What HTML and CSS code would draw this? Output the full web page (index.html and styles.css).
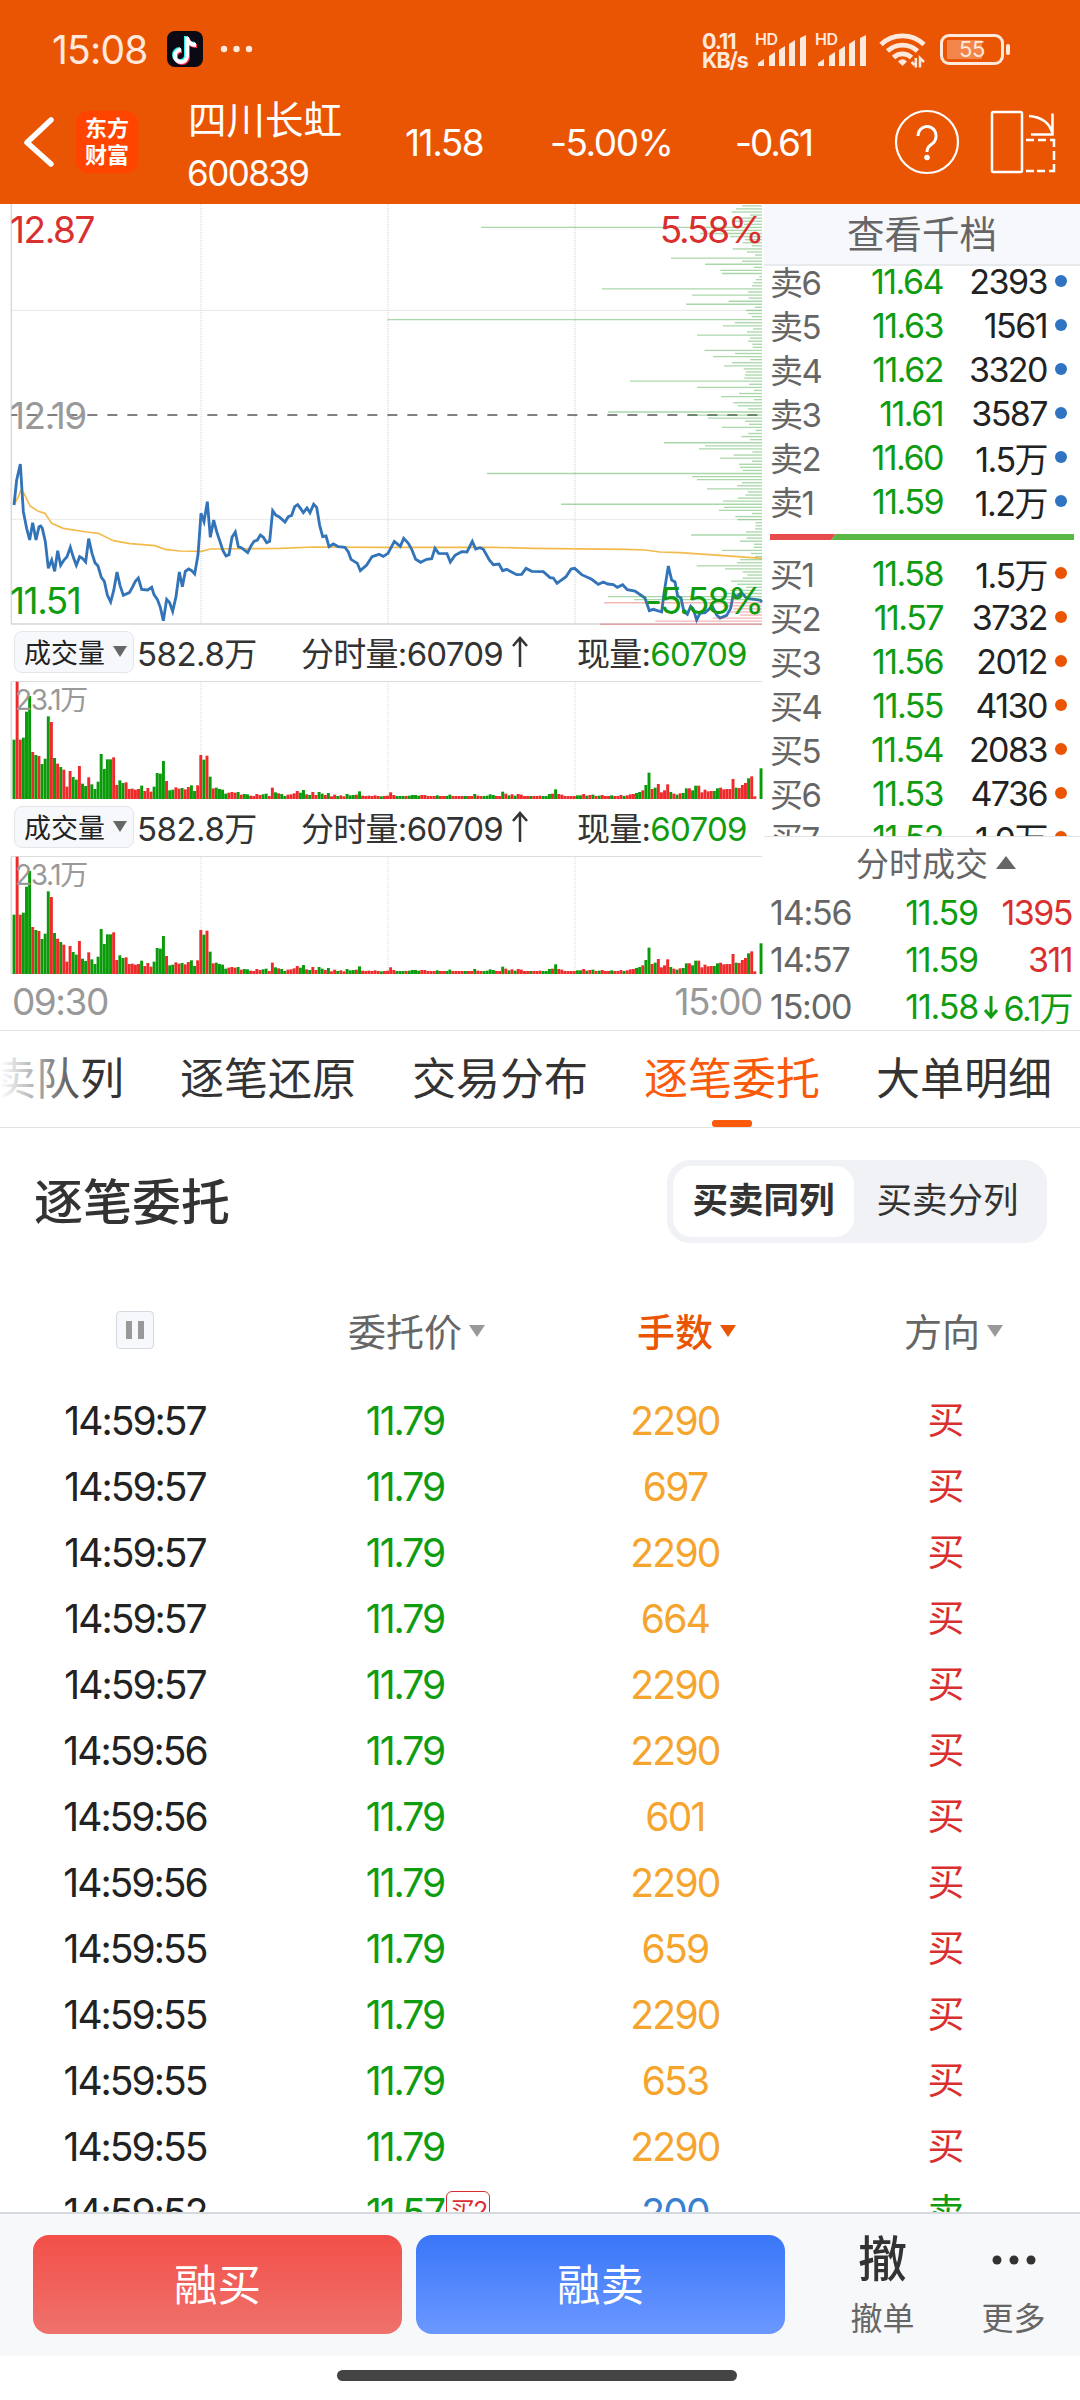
FILE: index.html
```html
<!DOCTYPE html>
<html lang="zh-CN">
<head>
    <meta charset="UTF-8">
    <meta name="viewport" content="width=device-width, initial-scale=1.0">
    <title>四川长虹 600839</title>
    <link rel="stylesheet" href="styles.css">
</head>
<body>
    <div class="header">
        <div class="status-bar">
            <span class="clock">15:08</span>
            <svg class="app-icon" width="36" height="36" viewBox="0 0 36 36">
                <rect width="36" height="36" rx="8" fill="#0b0a14"/>
                <g fill="none" stroke-width="4">
                    <path d="M19 5v19a6 6 0 1 1-6-6M19 6c1 5 4 7 9 7" stroke="#25f4ee"/>
                    <path d="M21 7v19a6 6 0 1 1-6-6M21 8c1 5 4 7 9 7" stroke="#fe2c55"/>
                    <path d="M20 6v19a6 6 0 1 1-6-6M20 7c1 5 4 7 9 7" stroke="#fff"/>
                </g>
            </svg>
            <svg class="more-dots" width="34" height="8" viewBox="0 0 34 8" fill="#ffe9dc">
                <circle cx="4" cy="4" r="3.2"/><circle cx="16.5" cy="4" r="3.2"/><circle cx="29" cy="4" r="3.2"/>
            </svg>
            <div class="net-speed"><span>0.11</span><span>KB/s</span></div>
            <div class="signal">
                <span>HD</span>
                <svg width="50" height="32" viewBox="0 0 50 32" fill="#ffe9dc">
                    <path d="M1 31v-3l6-4v7zM12 31V21l6-4v14zM22 31V15l6-4v20zM32 31V9l6-4v26zM43 31V3l6-3v31z"/>
                </svg>
            </div>
            <div class="signal signal-2">
                <span>HD</span>
                <svg width="50" height="32" viewBox="0 0 50 32" fill="#ffe9dc">
                    <path d="M1 31v-3l6-4v7zM12 31V21l6-4v14zM22 31V15l6-4v20zM32 31V9l6-4v26zM43 31V3l6-3v31z"/>
                </svg>
            </div>
            <svg class="wifi" width="48" height="36" viewBox="0 0 48 36" fill="none" stroke="#ffe9dc" stroke-width="4.8">
                <path d="M2 12.5a31 31 0 0 1 43 0"/>
                <path d="M8.5 19a22 22 0 0 1 30 0"/>
                <path d="M14.5 25.5a13 13 0 0 1 18 0"/>
                <path d="M23.5 34l-4.5-4.5q4.5-4.5 9 0z" fill="#ffe9dc" stroke="none"/>
                <path d="M32.5 30l3 3M36.8 26v9.5M41 35.5V26l4 4" stroke-width="2.5"/>
            </svg>
            <div class="battery"><span>55</span></div>
        </div>
        <div class="title-bar">
            <svg class="back" width="32" height="54" viewBox="0 0 32 54" fill="none" stroke="#fff" stroke-width="5.5" stroke-linecap="round" stroke-linejoin="round">
                <path d="M28 5L4 27.5 28 49"/>
            </svg>
            <div class="logo"><span>东方</span><span>财富</span></div>
            <div class="stock"><span class="stock-name">四川长虹</span><span class="stock-code">600839</span></div>
            <span class="quote quote-price">11.58</span>
            <span class="quote quote-pct">-5.00%</span>
            <span class="quote quote-chg">-0.61</span>
            <svg class="help" width="66" height="66" viewBox="0 0 66 66" fill="none" stroke="#fff" stroke-width="2.2">
                <circle cx="33" cy="33" r="31"/>
                <path d="M24 27a9 9.5 0 1 1 14.5 7.5C34.5 37.5 33 39 33 43" stroke-width="3"/>
                <circle cx="33" cy="48.5" r="2.8" fill="#fff" stroke="none"/>
            </svg>
            <svg class="rotate" width="68" height="66" viewBox="0 0 68 66" fill="none" stroke="#fff" stroke-width="2.5">
                <rect x="2" y="3" width="30" height="60" rx="1.5"/>
                <path d="M39 7c12 1 21 7 23.5 18M62.5 4.5v21H41"/>
                <path d="M36 31h8M48 31h8M60 31h4v7M64 42v9M64 55v7h-5M55 62h-8M44 62h-8"/>
            </svg>
        </div>
    </div>

    <div class="market">
        <div class="charts">
            <div class="plot price-plot">
                <svg id="priceChart" width="768" height="421" viewBox="0 12 2304 1263"></svg>
                <span class="label top-left red">12.87</span>
                <span class="label mid-left">12.19</span>
                <span class="label bottom-left green">11.51</span>
                <span class="label top-right red">5.58%</span>
                <span class="label bottom-right green">-5.58%</span>
            </div>
            <div class="vol-head">
                <span class="pill">成交量<i class="tri"></i></span>
                <span class="vol-total">582.8万</span>
                <span class="vol-minute">分时量:60709<svg width="20" height="32" viewBox="0 0 20 32" fill="none" stroke="#333" stroke-width="2.5"><path d="M10 31V3M3 10l7-8 7 8"/></svg></span>
                <span class="vol-now">现量:<b>60709</b></span>
            </div>
            <div class="plot">
                <svg class="vol-chart" width="768" height="119" viewBox="0 183 2304 357"></svg>
                <span class="vol-max">23.1万</span>
            </div>
            <div class="vol-head">
                <span class="pill">成交量<i class="tri"></i></span>
                <span class="vol-total">582.8万</span>
                <span class="vol-minute">分时量:60709<svg width="20" height="32" viewBox="0 0 20 32" fill="none" stroke="#333" stroke-width="2.5"><path d="M10 31V3M3 10l7-8 7 8"/></svg></span>
                <span class="vol-now">现量:<b>60709</b></span>
            </div>
            <div class="plot">
                <svg class="vol-chart" width="768" height="119" viewBox="0 183 2304 357"></svg>
                <span class="vol-max">23.1万</span>
            </div>
            <div class="times"><span>09:30</span><span>15:00</span></div>
        </div>

        <div class="book">
            <div class="book-title">查看千档</div>
            <div class="book-body">
                <div class="side" id="sells"></div>
                <svg class="ratio" width="304" height="6" viewBox="0 0 304 6">
                    <path d="M0 0h66l-5 6H0z" fill="#e84b4b"/>
                    <path d="M66 0h238v6H61z" fill="#5ab946"/>
                </svg>
                <div class="side" id="buys"></div>
            </div>
            <div class="ticks-title">分时成交<i class="tri-up"></i></div>
            <div class="tick"><span>14:56</span><span class="green">11.59</span><span class="red">1395</span></div>
            <div class="tick"><span>14:57</span><span class="green">11.59</span><span class="red">311</span></div>
            <div class="tick"><span>15:00</span><span class="green">11.58</span><span class="green"><svg width="16" height="26" viewBox="0 0 16 26" fill="none" stroke="#109c10" stroke-width="3"><path d="M8 2v20M2 16l6 7 6-7"/></svg>6.1万</span></div>
        </div>
    </div>

    <div class="tabs">
        <span>买卖队列</span>
        <span>逐笔还原</span>
        <span>交易分布</span>
        <span class="active">逐笔委托</span>
        <span>大单明细</span>
    </div>

    <div class="section-head">
        <h2>逐笔委托</h2>
        <div class="switch">
            <span class="on">买卖同列</span>
            <span>买卖分列</span>
        </div>
    </div>

    <div class="orders">
        <div class="order-row order-head">
            <span><i class="pause"></i></span>
            <span><em>委托价<i class="tri"></i></em></span>
            <span class="sorted"><em>手数<i class="tri"></i></em></span>
            <span class="dir-head"><em>方向<i class="tri"></i></em></span>
        </div>
        <div id="orderRows"></div>
    </div>

    <div class="bottom-bar">
        <button class="btn buy">融买</button>
        <button class="btn sell">融卖</button>
        <div class="action"><span class="action-icon">撤</span><span>撤单</span></div>
        <div class="action action-more">
            <span class="action-icon"><svg width="44" height="10" viewBox="0 0 44 10" fill="#333"><circle cx="5" cy="5" r="4.5"/><circle cx="22" cy="5" r="4.5"/><circle cx="39" cy="5" r="4.5"/></svg></span>
            <span>更多</span>
        </div>
    </div>
    <div class="home"><i></i></div>

    <script src="script.js"></script>
</body>
</html>
```

FILE: styles.css
```css
* {
    box-sizing: border-box;
}

body {
    margin: 0;
    width: 1080px;
    height: 2400px;
    overflow: hidden;
    display: flex;
    flex-direction: column;
    background: #fff;
    color: #333;
    font-family: Inter, "Noto Sans CJK SC", sans-serif;
    letter-spacing: -0.045em;
}

i, em {
    font-style: normal;
}

svg {
    display: block;
    flex: none;
}

span {
    white-space: nowrap;
}

.red {
    color: #d9302f;
}

.green {
    color: #109c10;
}

/* header */
.header {
    height: 204px;
    background: #ea5504;
    color: #fff;
}

.status-bar {
    display: flex;
    align-items: center;
    height: 98px;
    padding-left: 52px;
    color: #ffe9dc;
}

.clock {
    width: 115px;
    font-size: 39px;
    letter-spacing: -0.02em;
}

.more-dots {
    margin-left: 17px;
}

.net-speed {
    display: flex;
    flex-direction: column;
    width: 54px;
    margin: 4px 0 0 448px;
    font-size: 21.5px;
    line-height: 19px;
    font-weight: 700;
    letter-spacing: -0.05em;
}

.signal {
    position: relative;
    width: 60px;
    padding: 3px 0 0 1px;
}

.signal-2 {
    width: 63px;
}

.signal span {
    position: absolute;
    top: -1px;
    left: -1px;
    font-size: 16px;
    line-height: 16px;
    font-weight: 600;
    letter-spacing: -0.02em;
}

.wifi {
    margin-top: 2px;
}

.battery {
    position: relative;
    width: 64px;
    height: 31px;
    margin-left: 13px;
    border: 3px solid #ffe9dc;
    border-radius: 9px;
    font-size: 22px;
    line-height: 25px;
    text-align: center;
    background: linear-gradient(90deg, #f28549 0 35px, transparent 35px) 4px 3px / 100% 19px no-repeat content-box;
    letter-spacing: -0.02em;
}

.battery::after {
    content: "";
    position: absolute;
    right: -9px;
    top: 7px;
    width: 4px;
    height: 11px;
    border-radius: 2px;
    background: #ffe9dc;
}

.title-bar {
    display: flex;
    align-items: center;
    height: 88px;
    padding-left: 23px;
}

.logo {
    display: flex;
    flex-direction: column;
    justify-content: center;
    width: 62px;
    height: 62px;
    margin-left: 21px;
    border-radius: 12px;
    background: #ff4400;
    text-align: center;
    font-size: 22px;
    line-height: 27px;
    font-weight: 700;
    letter-spacing: 0;
}

.stock {
    display: flex;
    flex-direction: column;
    width: 217px;
    margin-left: 50px;
    padding-top: 8px;
}

.stock-name {
    font-size: 38.5px;
    line-height: 54px;
    letter-spacing: 0;
}

.stock-code {
    font-size: 35px;
    line-height: 52px;
    letter-spacing: -0.045em;
    margin-left: -1px;
}

.quote {
    font-size: 37px;
    letter-spacing: -0.04em;
}

.quote-price {
    width: 145px;
}

.quote-pct {
    width: 185px;
}

.quote-chg {
    width: 159px;
    letter-spacing: -0.055em;
}

.rotate {
    margin-left: 30px;
}

/* charts */
.market {
    display: flex;
    height: 827px;
    border-bottom: 1px solid #e2e2e2;
}

.charts {
    width: 764px;
}

.plot {
    position: relative;
}

.label {
    position: absolute;
    font-size: 37px;
    line-height: 40px;
    letter-spacing: -0.04em;
}

.top-left {
    left: 10px;
    top: 6px;
}

.mid-left {
    left: 10px;
    top: 192px;
    color: #999;
}

.bottom-left {
    left: 10px;
    top: 377px;
}

.top-right {
    right: 2px;
    top: 6px;
    letter-spacing: -0.06em;
}

.bottom-right {
    right: 2px;
    top: 377px;
    letter-spacing: -0.06em;
}

.vol-head {
    display: flex;
    align-items: center;
    height: 56px;
    padding: 0 0 2px 14px;
    font-size: 33px;
}

.pill {
    display: flex;
    align-items: center;
    width: 120px;
    height: 42px;
    padding-left: 9px;
    padding-bottom: 2px;
    border: 1px solid #e3e5e9;
    border-radius: 8px;
    background: #f7f8fb;
    font-size: 27px;
    letter-spacing: 0;
    color: #222;
}

.tri {
    border: 7px solid transparent;
    border-top: 11px solid #666;
    border-bottom: 0;
}

.pill .tri {
    margin-left: 8px;
}

.vol-total {
    width: 163px;
    padding-left: 3px;
    letter-spacing: -0.015em;
}

.vol-minute {
    display: flex;
    align-items: center;
    width: 280px;
    padding-left: 4px;
}

.vol-minute svg {
    margin-left: 7px;
}

.vol-now b {
    font-weight: 400;
    color: #109c10;
}

.vol-max {
    position: absolute;
    left: 15px;
    top: 3px;
    font-size: 28px;
    line-height: 32px;
    letter-spacing: -0.05em;
    color: #999;
}

.times {
    display: flex;
    justify-content: space-between;
    height: 56px;
    padding: 0 2px 0 12px;
    font-size: 37px;
    line-height: 54px;
    letter-spacing: -0.04em;
    color: #999;
}

/* order book */
.book {
    display: flex;
    flex-direction: column;
    width: 316px;
}

.book-title {
    height: 62px;
    border-bottom: 2px solid #e9eaec;
    background: #f7f8fb;
    text-align: center;
    font-size: 37.5px;
    line-height: 62px;
    letter-spacing: 0;
    color: #666;
}

.book-body {
    height: 572px;
    padding-left: 6px;
    overflow: hidden;
    border-bottom: 1px solid #e2e2e2;
}

.side {
    margin-top: -7px;
}

.ratio {
    margin: 11px 0 11px;
}

.level {
    display: flex;
    align-items: center;
    height: 44px;
    font-size: 34px;
    letter-spacing: -0.045em;
    color: #222;
}

.level-name {
    width: 72px;
    font-size: 33px;
    color: #666;
}

.level-price {
    width: 101px;
    text-align: right;
}

.level-qty {
    width: 104px;
    text-align: right;
}

.dot {
    width: 12px;
    height: 12px;
    margin-left: 8px;
    border-radius: 50%;
    background: #2f74c0;
}

#buys {
    margin-top: 0;
}

#buys .dot {
    background: #ea5504;
}

.ticks-title {
    display: flex;
    align-items: center;
    height: 52px;
    padding: 0 0 2px 92px;
    font-size: 33px;
    letter-spacing: 0;
    color: #666;
}

.tri-up {
    margin-left: 8px;
    border: 10px solid transparent;
    border-bottom: 13px solid #666;
    border-top: 0;
}

.tick {
    display: flex;
    align-items: center;
    height: 47px;
    padding-left: 6px;
    font-size: 34px;
    letter-spacing: -0.035em;
    color: #666;
}

.tick span:nth-child(1) {
    width: 110px;
}

.tick span:nth-child(2) {
    width: 98px;
    text-align: right;
}

.tick span:nth-child(3) {
    display: flex;
    align-items: center;
    justify-content: flex-end;
    width: 94px;
    letter-spacing: -0.045em;
}

.tick span:nth-child(2).green,
.tick span:nth-child(3).green {
    color: #109c10;
}

.tick svg {
    margin-right: 4px;
}

/* tabs */
.tabs {
    position: relative;
    display: flex;
    gap: 56px;
    height: 97px;
    margin-bottom: 2px;
    border-bottom: 1px solid #e2e2e2;
    font-size: 44px;
    line-height: 96px;
    letter-spacing: 0;
}

.tabs span:first-child {
    margin-left: -52px;
}

.tabs::before {
    content: "";
    position: absolute;
    left: 0;
    top: 0;
    width: 90px;
    height: 95px;
    background: linear-gradient(90deg, #fff, rgba(255, 255, 255, 0));
}

.tabs .active {
    position: relative;
    color: #fa5a0a;
}

.active::after {
    content: "";
    position: absolute;
    left: 68px;
    bottom: 0;
    width: 40px;
    height: 7px;
    border-radius: 3px;
    background: #fa5a0a;
}

.section-head {
    display: flex;
    justify-content: space-between;
    align-items: center;
    height: 142px;
    padding: 0 33px 0 34px;
    letter-spacing: 0;
}

h2 {
    margin: 0;
    padding-bottom: 6px;
    font-size: 49px;
    font-weight: 500;
}

.switch {
    display: flex;
    width: 380px;
    height: 83px;
    padding: 6px;
    border-radius: 23px;
    background: #f1f2f5;
    font-size: 35.5px;
    line-height: 70px;
    text-align: center;
}

.switch span {
    flex: 1;
}

.switch .on {
    flex: none;
    width: 181px;
    border-radius: 19px;
    background: #fff;
    font-weight: 700;
}

/* order list */
.orders {
    height: 940px;
    overflow: hidden;
}

.order-row {
    display: flex;
    height: 66px;
    align-items: center;
    font-size: 39px;
    letter-spacing: -0.051em;
    color: #222;
}

.order-row > span {
    width: 270px;
    text-align: center;
}

.order-head {
    height: 115px;
    color: #666;
    font-size: 38px;
    letter-spacing: 0;
}

.order-head em,
.order-price {
    position: relative;
}

.order-head .tri {
    position: absolute;
    left: 100%;
    top: 50%;
    margin: -7px 0 0 7px;
    border-width: 12px 8px 0;
    border-top-color: #999;
}

.order-head .dir-head {
    padding-right: 6px;
}

.order-head .sorted {
    color: #ea5504;
    font-weight: 500;
}

.order-head .sorted .tri {
    border-top-color: #ea5504;
}

.pause {
    display: block;
    width: 38px;
    height: 38px;
    margin: 0 auto;
    border: 1px solid #d5d9e0;
    border-radius: 4px;
    background: linear-gradient(90deg, #999 0 6px, transparent 6px 12px, #999 12px 18px) center / 18px 18px no-repeat #f7f8fb;
}

.order-row .order-qty {
    color: #f5a52d;
    letter-spacing: -0.045em;
}

.order-row .small {
    color: #3a80d0;
}

.order-row .dir {
    padding-bottom: 4px;
    font-size: 37px;
}

.queue-tag {
    position: absolute;
    left: 100%;
    top: 2px;
    margin-left: 2px;
    width: 44px;
    height: 38px;
    border: 1.5px solid #d9302f;
    border-radius: 6px;
    color: #d9302f;
    font-size: 25px;
    line-height: 38px;
}

/* bottom */
.bottom-bar {
    display: flex;
    height: 144px;
    padding: 21px 0 0 33px;
    border-top: 2px solid #d5d9de;
    background: #f7f8fa;
    letter-spacing: 0;
}

.btn {
    width: 369px;
    height: 99px;
    margin: 0 14px 0 0;
    padding-bottom: 6px;
    border: 0;
    border-radius: 16px;
    color: #fff;
    font-family: inherit;
    font-size: 43.5px;
}

.buy {
    background: linear-gradient(#f34f49, #ef726c);
}

.sell {
    background: linear-gradient(#3a76f8, #6b98ff);
}

.action {
    display: flex;
    flex-direction: column;
    align-items: center;
    width: 65px;
    margin-left: 51px;
    font-size: 32px;
    line-height: 68px;
    color: #666;
}

.action-icon {
    display: flex;
    align-items: center;
    height: 50px;
    font-size: 49px;
    font-weight: 500;
    color: #333;
}

.action-more {
    margin-left: 66px;
}

.home {
    padding-top: 14px;
}

.home i {
    display: block;
    width: 400px;
    height: 11px;
    margin-left: 337px;
    border-radius: 6px;
    background: #444;
}
```

FILE: script.js
```js
// chart coordinates are in thirds of a pixel
const GREEN = "#0a9a0a";
const RED = "#ee2a2a";

const price = `42,915 50,840 61,792 70,935 80,985 89,1020 98,968 108,1020 117,980 122,978 127,985 136,1025 145,1105 155,1080 164,1114
173,1052 182,1096 192,1080 201,1070 211,1042 220,1072 229,1096 239,1070 248,1076 257,1086 266,1016 276,1060 285,1088 294,1098 304,1132
313,1144 322,1185 332,1206 341,1172 351,1116 360,1156 370,1186 388,1178 397,1162 406,1144 415,1134 425,1168 443,1170 455,1162 462,1184
472,1198 481,1222 490,1262 500,1198 509,1208 518,1234 528,1190 538,1116 547,1160 556,1114 566,1107 575,1112 584,1122 594,1065 603,940
612,965 622,905 631,1012 641,960 650,995 659,1022 669,1052 678,1068 687,1064 696,1012 706,996 715,1040 725,1044 743,1058 753,1038
762,1024 772,1020 781,1005 790,1012 800,1028 809,1024 818,932 828,946 837,950 846,958 855,966 865,950 875,946 884,920 893,914 902,926
910,938 921,924 930,938 941,913 950,922 959,976 968,1010 978,1008 987,1040 1000,1032 1015,1040 1035,1042 1045,1056 1053,1078 1072,1090
1081,1112 1100,1095 1116,1070 1137,1063 1150,1069 1164,1060 1183,1024 1201,1039 1211,1015 1225,1030 1235,1048 1247,1078 1262,1087
1280,1078 1295,1076 1305,1045 1316,1060 1341,1061 1351,1086 1365,1066 1385,1055 1401,1056 1417,1024 1427,1047 1440,1043 1450,1048
1468,1080 1480,1094 1497,1092 1508,1112 1520,1108 1550,1124 1565,1123 1578,1105 1595,1114 1630,1115 1650,1133 1660,1134 1671,1150
1698,1130 1713,1107 1724,1105 1745,1124 1775,1138 1795,1153 1810,1146 1823,1152 1840,1154 1852,1162 1868,1154 1882,1169 1905,1173
1935,1194 1948,1232 1960,1228 1985,1236 1992,1180 2005,1098 2015,1140 2025,1146 2033,1188 2043,1194 2052,1236 2062,1243 2072,1219
2080,1228 2090,1260 2100,1240 2115,1238 2137,1219 2150,1245 2160,1254 2180,1246 2192,1225 2200,1182 2210,1190 2225,1178 2240,1195
2280,1200 2286,1206`;

const average = `42,915 55,890 62,872 72,880 90,918 115,934 135,940 155,970 190,985 260,996 295,1000 340,1022 390,1031 465,1037 495,1048
540,1053 605,1054 630,1047 840,1045 940,1041 1140,1042 1480,1042 1600,1045 1880,1048 1935,1050 1980,1056 2040,1058 2160,1066 2286,1075`;

// resting orders per price step, top to bottom
const depth = [59, 78, 91, 36, 84, 91, 54, 843, 126, 186, 96, 51, 58, 31, 88, 45, 21, 273, 60, 171, 24, 125, 120, 8, 18, 26, 30, 480,
    42, 210, 40, 100, 228, 21, 48, 41, 31, 1124, 82, 117, 27, 45, 195, 36, 42, 29, 28, 172, 81, 147, 36, 90, 114, 55, 49, 51, 53, 396,
    39, 195, 24, 69, 123, 24, 86, 72, 42, 462, 219, 162, 51, 39, 120, 19, 41, 62, 36, 294, 171, 189, 29, 85, 126, 30, 69, 66, 58, 825,
    210, 195, 60, 75, 165, 43, 50, 72, 117, 603, 114, 129, 30, 80, 74, 20, 19, 21, 48, 213, 46, 67, 24, 26, 120, 33, 21, 66, 75, 196,
    111, 58, 44, 58, 93, 74, 48, 96, 106, 462, 384, 473, 116, 86, 96, 66, 148, 320, 486];

// minute volumes, sign gives the colour: + up, - down
const volume = [-178, 352, 178, -184, -262, -309, 141, -132, 129, -105, -121, -248, 231, -123, 106, -96, 88, 37, 84, -66, -58, 99, -46,
    -39, 65, -44, -30, -52, -135, -90, -119, -119, 125, 42, -56, -48, 50, 30, 31, 28, 30, -40, 24, 33, 22, -37, -78, -76, -114, 54, -26,
    -28, 35, 31, -33, 29, 36, -41, -24, 41, 132, -118, 130, -67, 32, -34, -30, -28, -16, 19, 21, 19, -21, 13, -15, -14, 10, 9, 15, 12,
    -14, -16, 9, 34, -20, 17, -15, -9, 13, 14, 17, 24, -19, -27, 14, -12, 21, 12, -21, -16, 12, -18, 8, 13, -9, 11, 8, -15, -11, -12,
    13, -23, 10, 9, 10, 9, 11, 9, -8, 9, 10, 20, 12, -9, -9, -9, 9, -10, -12, -12, -10, 12, 12, 9, 9, 9, -11, 9, 9, -9, -13, 9, 9, 9, 9,
    -9, 9, 9, -15, 10, 9, -9, -10, -14, -12, 9, 9, -22, 16, -11, 14, -10, 15, 13, 9, 9, -9, 9, 9, 10, -9, -9, -15, 16, -29, 15, 13, 9, 9,
    9, 9, -11, -11, 15, -10, 12, -13, 9, -10, 12, 9, 9, -11, 9, 9, 12, -9, 11, 14, 15, -18, -21, 26, -42, -79, 30, -34, 45, 20, 26, 44,
    -21, 16, -13, 17, -18, -32, 32, -26, -40, 40, 20, 28, 23, 24, -24, -32, 34, 29, 30, 30, 60, -34, 33, 42, 48, -62, 68, 8, 0, -92];

function line(x1, y1, x2, y2, attrs) {
    return `<line x1="${x1}" y1="${y1}" x2="${x2}" y2="${y2}" ${attrs}/>`;
}

function drawPrice() {
    const grid = 'stroke="#d2d2d2" stroke-width="3" stroke-dasharray="3 3"';
    let out = line(34, 12, 34, 1272, 'stroke="#ddd" stroke-width="5"');
    out += line(34, 1272, 2286, 1272, 'stroke="#d6d6d6" stroke-width="5"');
    [603, 1164, 1725].forEach(x => out += line(x, 12, x, 1270, grid));
    [331, 958].forEach(y => out += line(34, y, 2286, y, grid));
    out += line(34, 645, 2286, 645, 'stroke="#808080" stroke-width="6" stroke-dasharray="30 30" stroke-dashoffset="12"');
    out += `<polyline points="${average}" fill="none" stroke="#f3bb4c" stroke-width="5"/>`;
    out += `<polyline points="${price}" fill="none" stroke="#3373b8" stroke-width="8.5"/>`;
    depth.forEach((w, i) => {
        const y = 17.5 + i * 9.23;
        const color = i > 128 ? "rgba(215,60,60,.38)" : "rgba(40,155,40,.4)";
        out += line(2286 - w, y, 2286, y, `stroke="${color}" stroke-width="4"`);
    });
    document.getElementById("priceChart").innerHTML = out;
}

function drawVolume(svg) {
    let out = line(34, 184, 34, 537, 'stroke="#ddd" stroke-width="5"');
    out += line(34, 184.5, 2286, 184.5, 'stroke="#ddd" stroke-width="3"');
    [603, 1164, 1725].forEach(x => out += line(x, 186, x, 537, 'stroke="#d8d8d8" stroke-width="3" stroke-dasharray="3 3"'));
    volume.forEach((v, i) => {
        const h = Math.abs(v);
        const x = 37.7 + i * 9.3375;
        out += `<rect x="${x.toFixed(1)}" y="${537 - h}" width="8.8" height="${h}" fill="${v < 0 ? GREEN : RED}"/>`;
    });
    svg.innerHTML = out;
}

const sells = [["卖6", "11.64", "2393"], ["卖5", "11.63", "1561"], ["卖4", "11.62", "3320"], ["卖3", "11.61", "3587"],
    ["卖2", "11.60", "1.5万"], ["卖1", "11.59", "1.2万"]];
const buys = [["买1", "11.58", "1.5万"], ["买2", "11.57", "3732"], ["买3", "11.56", "2012"], ["买4", "11.55", "4130"],
    ["买5", "11.54", "2083"], ["买6", "11.53", "4736"], ["买7", "11.52", "1.0万"]];

function renderLevels(id, levels) {
    document.getElementById(id).innerHTML = levels.map(([name, p, qty]) => `
        <div class="level">
            <span class="level-name">${name}</span>
            <span class="level-price green">${p}</span>
            <span class="level-qty">${qty}</span>
            <i class="dot"></i>
        </div>`).join("");
}

const orders = [["57", 2290], ["57", 697], ["57", 2290], ["57", 664], ["57", 2290], ["56", 2290], ["56", 601], ["56", 2290],
    ["55", 659], ["55", 2290], ["55", 653], ["55", 2290]];

function renderOrders() {
    let html = orders.map(([sec, qty]) => `
        <div class="order-row">
            <span>14:59:${sec}</span>
            <span class="green">11.79</span>
            <span class="order-qty">${qty}</span>
            <span class="dir red">买</span>
        </div>`).join("");
    html += `
        <div class="order-row">
            <span>14:59:52</span>
            <span class="green"><em class="order-price">11.57<i class="queue-tag">买2</i></em></span>
            <span class="order-qty small">200</span>
            <span class="dir green">卖</span>
        </div>`;
    document.getElementById("orderRows").innerHTML = html;
}

drawPrice();
document.querySelectorAll(".vol-chart").forEach(drawVolume);
renderLevels("sells", sells);
renderLevels("buys", buys);
renderOrders();
```
